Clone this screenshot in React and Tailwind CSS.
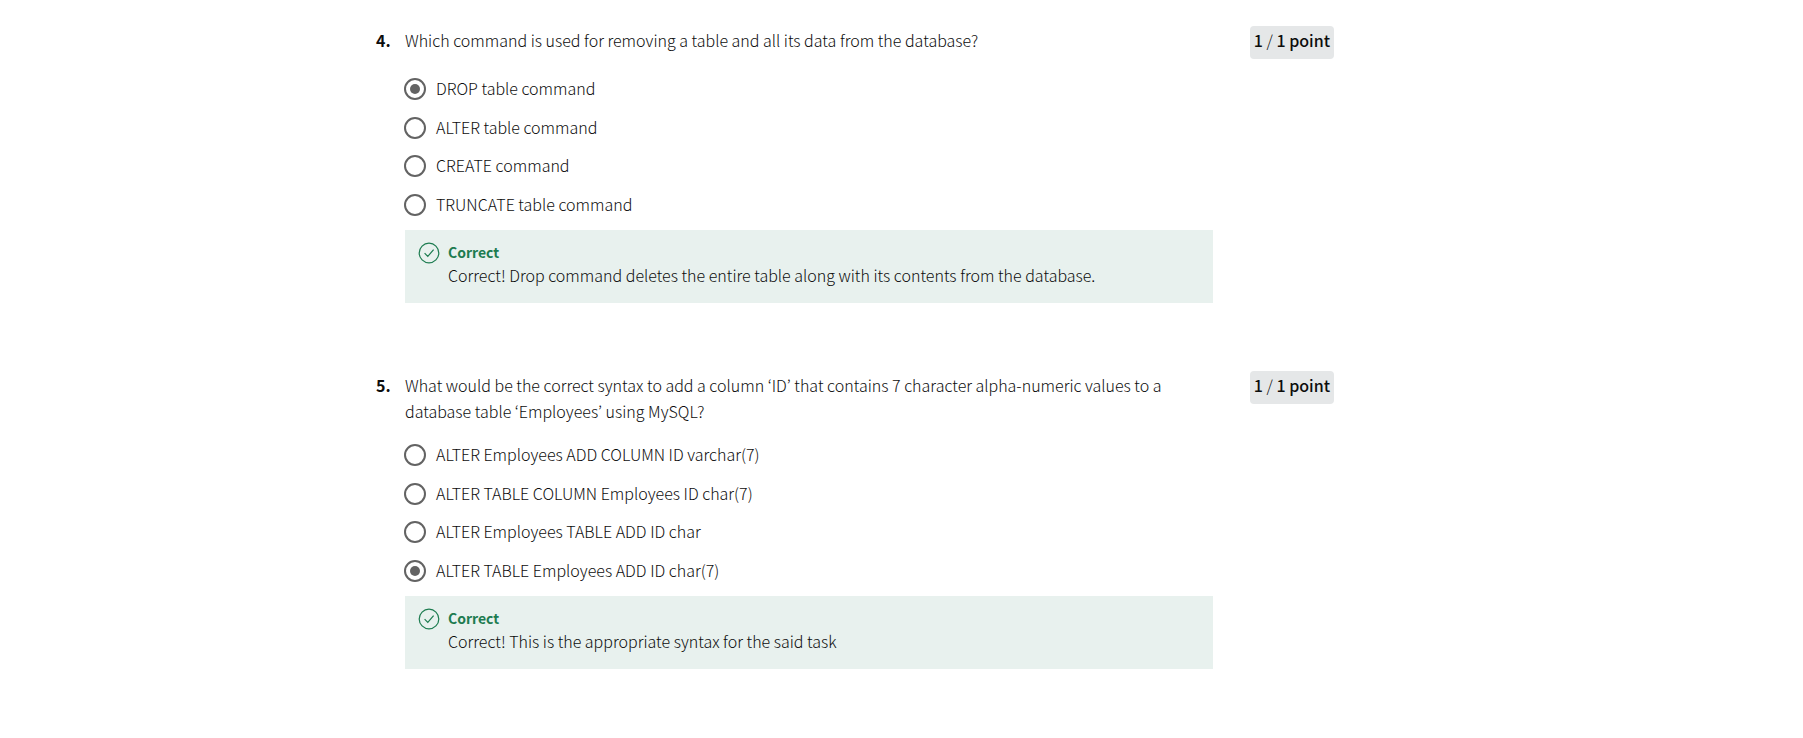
const questions = [
  {
    number: 4,
    text: 'Which command is used for removing a table and all its data from the database?',
    options: ['DROP table command', 'ALTER table command', 'CREATE command', 'TRUNCATE table command'],
    selected: 0,
    feedback: 'Correct! Drop command deletes the entire table along with its contents from the database.',
  },
  {
    number: 5,
    text: 'What would be the correct syntax to add a column ‘ID’ that contains 7 character alpha-numeric values to a database table ‘Employees’ using MySQL?',
    options: [
      'ALTER Employees ADD COLUMN ID varchar(7)',
      'ALTER TABLE COLUMN Employees ID char(7)',
      'ALTER Employees TABLE ADD ID char',
      'ALTER TABLE Employees ADD ID char(7)',
    ],
    selected: 3,
    feedback: 'Correct! This is the appropriate syntax for the said task',
  },
];

function CheckCircle() {
  return (
    <svg viewBox="0 0 22 22" className="size-[22px] shrink-0" fill="none" stroke="#1d7c50" aria-hidden="true">
      <circle cx="11" cy="11" r="9.8" strokeWidth="1.2" />
      <path d="M6.6 11.2l3.2 3.2 5.8-6.8" strokeWidth="1.2" />
    </svg>
  );
}

function Question({ number, text, options, selected, feedback }) {
  const id = `question-${number}`;
  return (
    <section className="grid grid-cols-[29px_minmax(0,1fr)_121px]">
      <span className="pt-px font-bold">{number}.</span>
      <p id={id} className="pt-px pb-px">{text}</p>
      <span className="h-[33px] justify-self-end self-start rounded bg-[#e5e7e8] px-1 leading-7 font-medium whitespace-nowrap">
        1 <span className="font-light">/</span> 1 point
      </span>

      <div className="col-start-2 mt-[11px]">
        <div role="radiogroup" aria-labelledby={id} className="grid min-h-[154px] auto-rows-fr">
          {options.map((option, i) => (
            <label key={option} className="flex items-center gap-[10px] -ml-px">
              <input
                type="radio"
                name={id}
                defaultChecked={i === selected}
                className="size-[22px] shrink-0 appearance-none rounded-full border-2 border-[#636363] bg-clip-content p-1 checked:bg-[#636363]"
              />
              <span className="pb-[2px]">{option}</span>
            </label>
          ))}
        </div>

        <div className="mt-[6px] flex gap-2 bg-[#e8f1ee] pt-3 pb-4 pl-[13px] pr-3">
          <CheckCircle />
          <div>
            <p className="text-sm leading-[21px] font-bold text-[#1d7c50]">Correct</p>
            <p className="leading-6">{feedback}</p>
          </div>
        </div>
      </div>
    </section>
  );
}

export default function App() {
  return (
    <main className="bg-white pr-[93px] font-['Noto_Sans_CJK_KR',sans-serif] text-base leading-[26px] font-light text-[#0d0d0d]">
      <div className="mx-auto flex max-w-[958px] flex-col gap-[68px] pt-[26px] pb-[68px]">
        {questions.map((q) => (
          <Question key={q.number} {...q} />
        ))}
      </div>
    </main>
  );
}
